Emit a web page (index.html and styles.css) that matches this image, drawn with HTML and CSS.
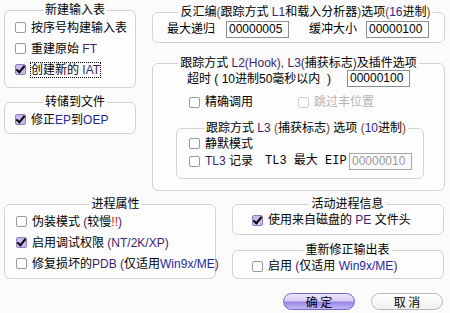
FILE: index.html
```html
<html>
<head>
    <link rel="stylesheet" href="styles.css">
</head>
<body>

<div class="top">
    <div class="col-left">
        <fieldset class="box box-new">
            <legend>新建输入表</legend>
            <div class="row"><span class="cb"></span><span>按序号构建输入表</span></div>
            <div class="row"><span class="cb"></span><span>重建原始 <span class="lat">FT</span></span></div>
            <div class="row"><span class="cb on"></span><span class="focus">创建新的 <span class="lat">IAT</span></span></div>
        </fieldset>

        <fieldset class="box box-dump">
            <legend>转储到文件</legend>
            <div class="row"><span class="cb on"></span><span>修正<span class="blue">EP</span>到<span class="blue">OEP</span></span></div>
        </fieldset>
    </div>

    <div class="col-right">
        <fieldset class="box box-disasm">
            <legend>反汇编<span class="brn">(</span>跟踪方式 <span class="lat">L1</span>和载入分析器<span class="brn">)</span>选项<span class="brn">(</span><span class="blue">16</span>进制<span class="brn">)</span></legend>
            <div class="row-in">
                <span class="lbl">最大递归</span>
                <span class="field">00000005</span>
                <span class="lbl lbl2">缓冲大小</span>
                <span class="field">00000100</span>
            </div>
        </fieldset>

        <fieldset class="box box-trace">
            <legend>跟踪方式 <span class="lat">L2(Hook), L3(</span>捕获标志<span class="lat">)</span>及插件选项</legend>
            <div class="row-in timeout">
                <span class="lbl">超时 (&nbsp;10进制50毫秒以内&nbsp;&nbsp;)</span>
                <span class="field">00000100</span>
            </div>
            <div class="row-chk">
                <span class="row"><span class="cb"></span><span>精确调用</span></span>
                <span class="row off"><span class="cb"></span><span>跳过丰位置</span></span>
            </div>

            <fieldset class="box box-l3">
                <legend>跟踪方式 <span class="lat">L3</span> <span class="brn">(</span>捕获标志<span class="brn">)</span> 选项 <span class="brn">(</span><span class="blue">10</span>进制<span class="brn">)</span></legend>
                <div class="row"><span class="cb"></span><span>静默模式</span></div>
                <div class="row-in">
                    <span class="row"><span class="cb"></span><span><span class="lat">TL3</span> 记录</span></span>
                    <span class="mono">TL3 最大 EIP</span>
                    <span class="field dis">00000010</span>
                </div>
            </fieldset>
        </fieldset>
    </div>
</div>

<div class="bottom">
    <fieldset class="box box-proc">
        <legend>进程属性</legend>
        <div class="row"><span class="cb"></span><span>伪装模式 <span class="lat">(</span>较慢<span class="red">!!</span><span class="lat">)</span></span></div>
        <div class="row"><span class="cb on"></span><span>启用调试权限 <span class="lat">(NT/2K/XP)</span></span></div>
        <div class="row"><span class="cb"></span><span>修复损坏的<span class="lat">PDB (</span>仅适用<span class="blue">Win9x/ME</span><span class="lat">)</span></span></div>
    </fieldset>

    <div class="col-br">
        <fieldset class="box box-active">
            <legend>活动进程信息</legend>
            <div class="row"><span class="cb on"></span><span>使用来自磁盘的 <span class="lat">PE</span> 文件头</span></div>
        </fieldset>
        <fieldset class="box box-fix">
            <legend>重新修正输出表</legend>
            <div class="row"><span class="cb"></span><span>启用 <span class="lat">(</span>仅适用 <span class="blue">Win9x/ME</span><span class="lat">)</span></span></div>
        </fieldset>
    </div>
</div>

<div class="buttons">
    <button class="btn btn-ok">确 定</button>
    <button class="btn">取 消</button>
</div>

</body>
</html>
```

FILE: styles.css
```css
body {
    margin: 0;
    padding: 3px 5px 0 4px;
    width: 441px;
    height: 310px;
    overflow: hidden;
    background: #fbfbfb;
    font-family: "Liberation Sans", "Noto Sans CJK SC", sans-serif;
    font-size: 12px;
    line-height: 14px;
    color: #000;
}

.top {
    display: flex;
    gap: 16px;
}
.col-left {
    width: 132px;
}
.col-right {
    width: 293px;
    padding-top: 2px;
}

/* group boxes */
.box {
    margin: 0;
    padding: 0 0 0 10px;
    border: 1px solid #d2d2d2;
    border-radius: 6px;
    box-shadow: inset 0 0 0 1px #fff;
    background: #fdfdfd;
    min-width: 0;
    box-sizing: border-box;
}
.box legend {
    margin: 0 auto;
    padding: 0 2px;
    line-height: 14px;
}

.row {
    display: flex;
    align-items: center;
    height: 21px;
    white-space: nowrap;
}
.off {
    color: #b4b4b4;
}
.off .cb {
    border-color: #d0d0d0;
}

/* checkbox */
.cb {
    display: inline-block;
    width: 9px;
    height: 9px;
    border: 1px solid #9a9a9a;
    border-radius: 2px;
    background: #fff;
    margin-right: 5px;
    position: relative;
    flex: none;
}
.cb.on {
    background: #cbb9ee;
    border-color: #8f7fb8;
}
.cb.on::after {
    content: "";
    position: absolute;
    left: 2px;
    top: -1px;
    width: 3px;
    height: 7px;
    border: solid #000;
    border-width: 0 2px 2px 0;
    transform: rotate(40deg);
}
.focus {
    outline: 1px dotted #000;
    outline-offset: 0;
}

.lat { color: #3d1f70; }
.blue { color: #1d2a9c; }
.brn { color: #7a4a20; }
.red { color: #d01818; }

/* left column */
.box-new {
    height: 85px;
}
.box-dump {
    margin-top: 7px;
    height: 39px;
}

/* text fields */
.field {
    display: inline-block;
    width: 63px;
    height: 17px;
    box-sizing: border-box;
    border: 1px solid #8e8e8e;
    background: #fff;
    padding-left: 2px;
    line-height: 15px;
    font-size: 12px;
}
.field.dis {
    border-color: #a8a8a8;
    background: #fafafa;
    color: #9a9a9a;
}
.row-in {
    display: flex;
    align-items: center;
    height: 18px;
    white-space: nowrap;
}

/* right column */
.box-disasm {
    height: 38px;
    padding-left: 14px;
}
.box-disasm .row-in {
    margin-top: 1px;
}
.box-disasm .lbl {
    width: 59px;
}
.box-disasm .lbl2 {
    margin-left: 20px;
    width: 57px;
}

.box-trace {
    margin-top: 13px;
    height: 135px;
    padding-left: 0;
}
.timeout {
    padding-left: 34px;
    height: 17px;
}
.timeout .lbl {
    width: 160px;
}
.row-chk {
    display: flex;
    margin-top: 6px;
    height: 18px;
    padding-left: 36px;
}
.row-chk .row {
    height: 18px;
    width: 109px;
}

.box-l3 {
    margin: 10px 0 0 23px;
    width: 248px;
    height: 58px;
    padding-left: 12px;
}
.box-l3 .row {
    height: 17px;
}
.box-l3 .row-in .row {
    width: 76px;
}
.mono {
    font-family: "Liberation Mono", "Noto Sans CJK SC", monospace;
    font-size: 12px;
    width: 84px;
}

/* bottom */
.bottom {
    display: flex;
    gap: 16px;
    margin-top: 6px;
}
.box-proc {
    width: 212px;
    height: 82px;
    padding-left: 11px;
}
.col-br {
    width: 212px;
}
.box-active {
    height: 38px;
    padding-left: 19px;
}
.box-active .row,
.box-fix .row {
    height: 18px;
}
.box-fix {
    margin-top: 8px;
    height: 36px;
    padding-left: 19px;
}

/* buttons */
.buttons {
    display: flex;
    justify-content: flex-end;
    gap: 16px;
    margin-top: 14px;
    padding-right: 2px;
}
.btn {
    width: 72px;
    height: 17px;
    padding: 0;
    border: 1px solid #b8b8b8;
    border-radius: 9px;
    background: linear-gradient(#ffffff, #f0f0f0);
    font-family: "Noto Sans CJK SC", sans-serif;
    font-size: 12px;
    line-height: 15px;
    color: #000;
}
.btn-ok {
    border-color: #7466c8;
    background: linear-gradient(#ece6fb 0%, #d6ccf6 45%, #9a86e6 55%, #c6b8f4 100%);
}
```
